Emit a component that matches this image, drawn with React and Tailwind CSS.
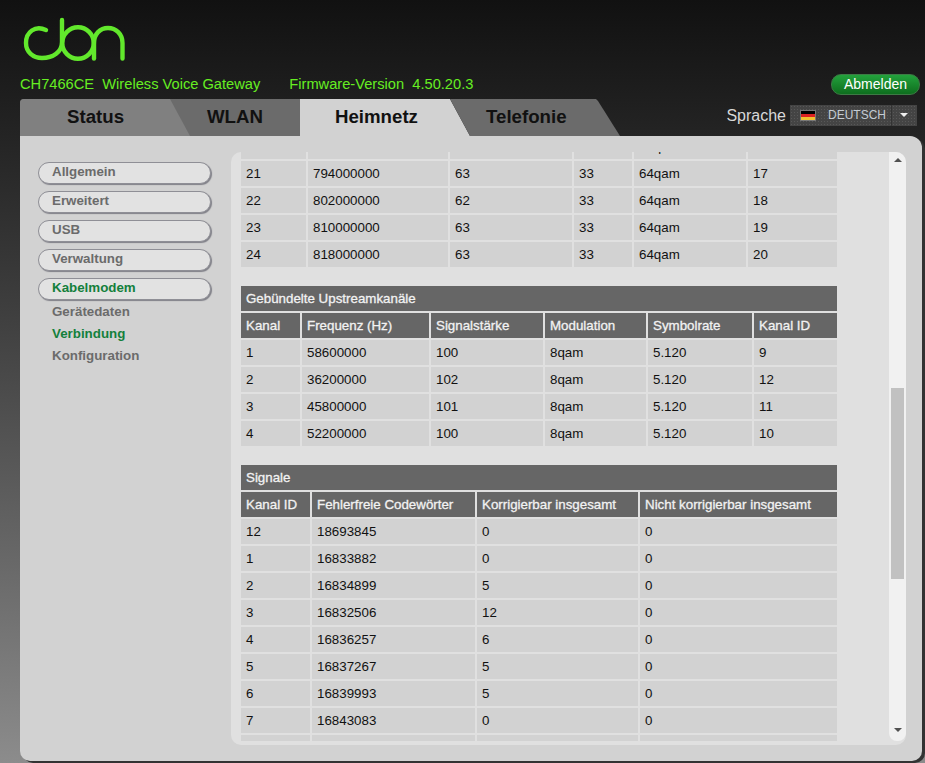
import React from 'react'

const font = 'font-["Liberation_Sans",Arial,sans-serif]'

const firstRows = [
  ['20', '786000000', '63', '33', '64qam', '16'],
  ['21', '794000000', '63', '33', '64qam', '17'],
  ['22', '802000000', '62', '33', '64qam', '18'],
  ['23', '810000000', '63', '33', '64qam', '19'],
  ['24', '818000000', '63', '33', '64qam', '20'],
]

const upHead = ['Kanal', 'Frequenz (Hz)', 'Signalstärke', 'Modulation', 'Symbolrate', 'Kanal ID']
const upRows = [
  ['1', '58600000', '100', '8qam', '5.120', '9'],
  ['2', '36200000', '102', '8qam', '5.120', '12'],
  ['3', '45800000', '101', '8qam', '5.120', '11'],
  ['4', '52200000', '100', '8qam', '5.120', '10'],
]

const sigHead = ['Kanal ID', 'Fehlerfreie Codewörter', 'Korrigierbar insgesamt', 'Nicht korrigierbar insgesamt']
const sigRows = [
  ['12', '18693845', '0', '0'],
  ['1', '16833882', '0', '0'],
  ['2', '16834899', '5', '0'],
  ['3', '16832506', '12', '0'],
  ['4', '16836257', '6', '0'],
  ['5', '16837267', '5', '0'],
  ['6', '16839993', '5', '0'],
  ['7', '16843083', '0', '0'],
  ['8', '16845120', '0', '0'],
]

const firstCols = 'grid-cols-[65px_140px_122px_58px_112px_1fr]'
const upCols = 'grid-cols-[59px_127px_112px_101px_104px_1fr]'
const sigCols = 'grid-cols-[69px_163px_161px_1fr]'

const Row = ({ cells, cols, head }) => (
  <div className={`grid ${cols} gap-x-[2px] mb-[2px] h-[25px]`}>
    {cells.map((c, i) => (
      <div
        key={i}
        className={
          head
            ? 'bg-[#666666] pl-[5px] text-[13.33px] leading-[25px] text-[#f2f2f2] [-webkit-text-stroke:0.3px_#f2f2f2] whitespace-nowrap'
            : 'bg-[#d2d2d2] pl-[5px] text-[13.33px] leading-[25px] text-[#111111]'
        }
      >
        {c}
      </div>
    ))}
  </div>
)

const Table = ({ title, head, rows, cols }) => (
  <div className="mb-[19px]">
    <div className="mb-[2px] h-[25px] bg-[#666666] pl-[5px] text-[13.33px] leading-[25px] text-[#f2f2f2] [-webkit-text-stroke:0.3px_#f2f2f2]">
      {title}
    </div>
    <Row cells={head} cols={cols} head />
    {rows.map((r) => (
      <Row key={r[0]} cells={r} cols={cols} />
    ))}
  </div>
)

const Pill = ({ label, active }) => (
  <div
    className={`mb-[7px] h-[22px] w-[173px] rounded-[11px] border border-[#8f8f96] bg-[#e2e2e2] pl-[13px] text-[13.33px] leading-[18px] font-bold shadow-[1px_1px_1px_#808088] ${
      active ? 'text-[#14803c]' : 'text-[#6b6b6b]'
    }`}
  >
    {label}
  </div>
)

const Logo = () => (
  <svg width="110" height="50" viewBox="20 15 110 50" fill="none" stroke="#62e82c" strokeWidth="4.4" strokeLinecap="round">
    <path d="M46 30 C35 25 26 32 26 43 C26 52 33 58 42 58 C53 58 62 52 62 42 L62 20" />
    <circle cx="78" cy="43" r="15.7" />
    <path d="M94 43 L94 58.5" />
    <path d="M94 43 C94 34 100 28 108 28 C116 28 122.5 34 122.5 43 L122.5 58.5" />
  </svg>
)

export default function App() {
  return (
    <div className={`${font} relative h-[763px] w-[925px] overflow-hidden bg-gradient-to-b from-[#111111] via-[#222222] via-[16%] to-[#8c8c8c]`}>
      {/* Header */}
      <div className="h-[99px] pl-[20px] pr-[5px]">
        <div className="h-[70px] pt-[15px]">
          <Logo />
        </div>
        <div className="flex items-start">
          <div className="text-[14.67px] leading-[29px] text-[#66ee22] whitespace-pre">
            {'CH7466CE  Wireless Voice Gateway'}
            <span className="ml-[29px]">{'Firmware-Version  4.50.20.3'}</span>
          </div>
          <button className="ml-auto mt-[4px] h-[21px] w-[89px] rounded-[10px] border border-[#3c7a44] bg-gradient-to-b from-[#23a23c] to-[#0e6e1e] text-[14px] leading-[17px] text-white">
            Abmelden
          </button>
        </div>
      </div>

      {/* Tabs */}
      <div className="flex h-[37px] pl-[20px] pr-[8px] text-[18.67px] font-bold leading-[36px] text-[#111111]">
        <div className="flex h-full w-[280px] rounded-tl-[4px] bg-[#6b6b6b]">
          <div className="h-full w-[170px] rounded-tl-[4px] bg-[#808080] pl-[47px] [clip-path:polygon(0_0,150px_0,100%_100%,0_100%)]">
            Status
          </div>
          <div className="pl-[17px]">WLAN</div>
        </div>
        <div className="h-full w-[170px] bg-[#d2d2d2] pl-[35px] [clip-path:polygon(0_0,150px_0,100%_100%,0_100%)]">
          Heimnetz
        </div>
        <div className="-ml-[20px] h-full w-[170px] bg-[#6b6b6b] pl-[36px] [clip-path:polygon(0_0,146px_0,148px_2px,100%_100%,20px_100%)]">
          Telefonie
        </div>
        <div className="ml-auto mt-[6px] flex h-[21px] items-center text-[16px] font-normal">
          <span className="mr-[4px] text-[#d8d8d8]">Sprache</span>
          <div className="flex h-[21px] w-[127px] items-center bg-[#444444] bg-[radial-gradient(#585858_1px,transparent_1px)] bg-[length:3px_3px]">
            <div className="ml-[10px] flex h-[11px] w-[16px] flex-col border border-[#777777]">
              <div className="flex-1 bg-black" />
              <div className="flex-1 bg-[#dd2222]" />
              <div className="flex-1 bg-[#f2c230]" />
            </div>
            <span className="ml-[12px] w-[61px] text-[12px] leading-[21px] text-[#c4ccd4]">DEUTSCH</span>
            <div className="ml-[2px] h-full border-l border-[#333333] pl-[8px] pt-[8px]">
              <div className="h-0 w-0 border-x-[4px] border-t-[4px] border-x-transparent border-t-[#eeeeee]" />
            </div>
          </div>
        </div>
      </div>

      {/* Main panel */}
      <div className="ml-[20px] flex h-[625px] w-[902px] rounded-b-[10px] rounded-tr-[12px] bg-[#d2d2d2] pb-[16px] pt-[16px] shadow-[3px_2px_0_#333333]">
        <div className="w-[211px] shrink-0 pl-[18px] pt-[10px]">
          <Pill label="Allgemein" />
          <Pill label="Erweitert" />
          <Pill label="USB" />
          <Pill label="Verwaltung" />
          <Pill label="Kabelmodem" active />
          <div className="-mt-[6px] pl-[14px] text-[13.33px] font-bold leading-[22px] text-[#6b6b6b]">
            <div>Gerätedaten</div>
            <div className="text-[#14803c]">Verbindung</div>
            <div>Konfiguration</div>
          </div>
        </div>

        <div className="h-[593px] w-[675px] overflow-hidden rounded-[10px] bg-[#e0e0e0] pb-[4px]">
          <div className="flex h-full">
            <div className="w-[658px] overflow-hidden pl-[10px] pr-[52px]">
              <div className="-mt-[18px]">
                <div className="mb-[19px]">
                  {firstRows.map((r) => (
                    <Row key={r[0]} cells={r} cols={firstCols} />
                  ))}
                </div>
                <Table title="Gebündelte Upstreamkanäle" head={upHead} rows={upRows} cols={upCols} />
                <Table title="Signale" head={sigHead} rows={sigRows} cols={sigCols} />
              </div>
            </div>
            {/* Scrollbar */}
            <div className="flex w-[17px] flex-col items-center rounded-b-[8px] bg-[#f1f1f1]">
              <div className="mt-[6px] h-0 w-0 border-x-[4px] border-b-[4px] border-x-transparent border-b-[#505050]" />
              <div className="mt-[226px] h-[191px] w-[13px] bg-[#c1c1c1]" />
              <div className="mb-[9px] mt-auto h-0 w-0 border-x-[4px] border-t-[4px] border-x-transparent border-t-[#505050]" />
            </div>
          </div>
        </div>
      </div>
    </div>
  )
}
